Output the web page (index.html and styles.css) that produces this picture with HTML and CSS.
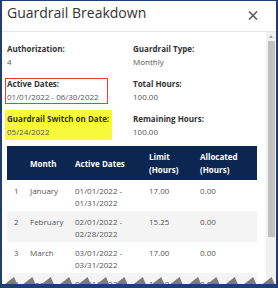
FILE: index.html
```html
<!DOCTYPE html>
<html lang="en">
<head>
<meta charset="utf-8">
<title>Guardrail Breakdown</title>
<link rel="stylesheet" href="styles.css">
</head>
<body>
<div class="frame">
  <div class="modal-header">
    <h1 class="title">Guardrail Breakdown</h1>
    <button class="close" aria-label="Close">
      <svg width="10" height="9" viewBox="0 0 10 9"><path d="M1 0.5 L9 8.5 M9 0.5 L1 8.5" stroke="#5c5c5c" stroke-width="1.6" fill="none"/></svg>
    </button>
  </div>
  <div class="modal-body">
    <div class="content">
      <div class="fields">
        <div class="field"><div class="label">Authorization:</div><div class="value">4</div></div>
        <div class="field"><div class="label">Guardrail Type:</div><div class="value">Monthly</div></div>
        <div class="field boxed"><div class="label">Active Dates:</div><div class="value">01/01/2022 - 06/30/2022</div></div>
        <div class="field"><div class="label">Total Hours:</div><div class="value">100.00</div></div>
        <div class="field highlighted"><div class="label">Guardrail Switch on Date:</div><div class="value">05/24/2022</div></div>
        <div class="field"><div class="label">Remaining Hours:</div><div class="value">100.00</div></div>
      </div>
      <table class="breakdown">
        <colgroup>
          <col class="c-num"><col class="c-month"><col class="c-dates"><col class="c-limit"><col class="c-alloc">
        </colgroup>
        <thead>
          <tr><th></th><th>Month</th><th>Active Dates</th><th>Limit<br>(Hours)</th><th>Allocated<br>(Hours)</th></tr>
        </thead>
        <tbody>
          <tr><td>1</td><td>January</td><td>01/01/2022 -<br>01/31/2022</td><td>17.00</td><td>0.00</td></tr>
          <tr><td>2</td><td>February</td><td>02/01/2022 -<br>02/28/2022</td><td>15.25</td><td>0.00</td></tr>
          <tr><td>3</td><td>March</td><td>03/01/2022 -<br>03/31/2022</td><td>17.00</td><td>0.00</td></tr>
          <tr><td>4</td><td>April</td><td>04/01/2022 -<br>04/30/2022</td><td>16.50</td><td>0.00</td></tr>
        </tbody>
      </table>
    </div>
    <div class="scrollbar"><span class="arrow"></span><span class="thumb"></span></div>
  </div>
  <svg class="torn" width="274" height="8" viewBox="0 0 274 8">
    <g fill="#7b7b7b">
      <polygon points="3,8 12,1 15,8"/>
      <polygon points="21.4,8 30.4,1 33.4,8"/>
      <polygon points="39.8,8 48.8,1 51.8,8"/>
      <polygon points="58.2,8 67.2,1 70.2,8"/>
      <polygon points="76.6,8 85.6,1 88.6,8"/>
      <polygon points="95,8 104,1 107,8"/>
      <polygon points="113.4,8 122.4,1 125.4,8"/>
      <polygon points="131.8,8 140.8,1 143.8,8"/>
      <polygon points="150.2,8 159.2,1 162.2,8"/>
      <polygon points="168.6,8 177.6,1 180.6,8"/>
      <polygon points="187,8 196,1 199,8"/>
      <polygon points="205.4,8 214.4,1 217.4,8"/>
      <polygon points="223.8,8 232.8,1 235.8,8"/>
      <polygon points="242.2,8 251.2,1 254.2,8"/>
      <polygon points="260.6,8 269.6,1 272.6,8"/>
    </g>
  </svg>
</div>
</body>
</html>
```
FILE: styles.css
```css
html, body {
  margin: 0;
  padding: 0;
  background: #ffffff;
}

.frame {
  position: relative;
  width: 278px;
  height: 288px;
  box-sizing: border-box;
  border-style: solid;
  border-color: #1f3e73;
  border-width: 1px 2px 4px 2px;
  background: #ffffff;
  overflow: hidden;
  display: flex;
  flex-direction: column;
  font-family: "Open Sans", "DejaVu Sans", sans-serif;
}

.modal-header {
  flex: none;
  height: 30px;
  border-bottom: 1px solid #e6e6e6;
  display: flex;
  justify-content: space-between;
  align-items: flex-start;
  padding-left: 5px;
}

.title {
  margin: 0;
  padding-top: 2px;
  font-size: 14px;
  line-height: 20px;
  font-weight: 400;
  color: #333333;
}

.close {
  display: block;
  border: 0;
  background: none;
  padding: 0;
  margin: 10px 18px 0 0;
  width: 10px;
  height: 9px;
}

.close svg {
  display: block;
}

.modal-body {
  flex: 1;
  min-height: 0;
  display: flex;
}

.content {
  flex: 1;
  padding: 10px 0 0 5px;
  overflow: hidden;
}

.fields {
  display: grid;
  grid-template-columns: 126px 1fr;
  row-gap: 9px;
  font-size: 8px;
  line-height: 13px;
}

.field {
  justify-self: start;
  white-space: nowrap;
}

.label {
  font-weight: 700;
  color: #333333;
}

.value {
  color: #555555;
}

.boxed {
  position: relative;
}

.boxed::before {
  content: "";
  position: absolute;
  top: 1px;
  bottom: -1px;
  left: -2px;
  width: 103px;
  border: 1px solid #e0443f;
  box-sizing: border-box;
}

.highlighted {
  background: #f9f93c;
  margin: -2px 0 -2px -2px;
  padding: 2px 3px 2px 2px;
}

.breakdown {
  margin-top: 8px;
  width: 250px;
  table-layout: fixed;
  border-collapse: collapse;
  font-size: 8px;
}

.c-num { width: 16px; }
.c-month { width: 45px; }
.c-dates { width: 74px; }
.c-limit { width: 51px; }
.c-alloc { width: 64px; }

.breakdown th {
  background: #0b2651;
  color: #ffffff;
  font-weight: 700;
  text-align: left;
  vertical-align: middle;
  line-height: 13px;
  padding: 4px 0 4px 7px;
}

.breakdown td {
  color: #555555;
  vertical-align: top;
  line-height: 12px;
  padding: 5px 0 2px 7px;
  white-space: nowrap;
}

.breakdown tbody tr:nth-child(even) td {
  background: #f4f4f4;
}

.scrollbar {
  flex: none;
  width: 10px;
  background: #f1f1f1;
}

.arrow {
  display: block;
  width: 0;
  height: 0;
  margin: 3px 0 0 3px;
  border-left: 2.5px solid transparent;
  border-right: 2.5px solid transparent;
  border-bottom: 3px solid #a3a3a3;
}

.thumb {
  display: block;
  margin: 3px 0 0 2px;
  width: 7px;
  height: 196px;
  background: #c1c1c1;
}

.torn {
  position: absolute;
  left: 0;
  bottom: 0;
  display: block;
}
```
